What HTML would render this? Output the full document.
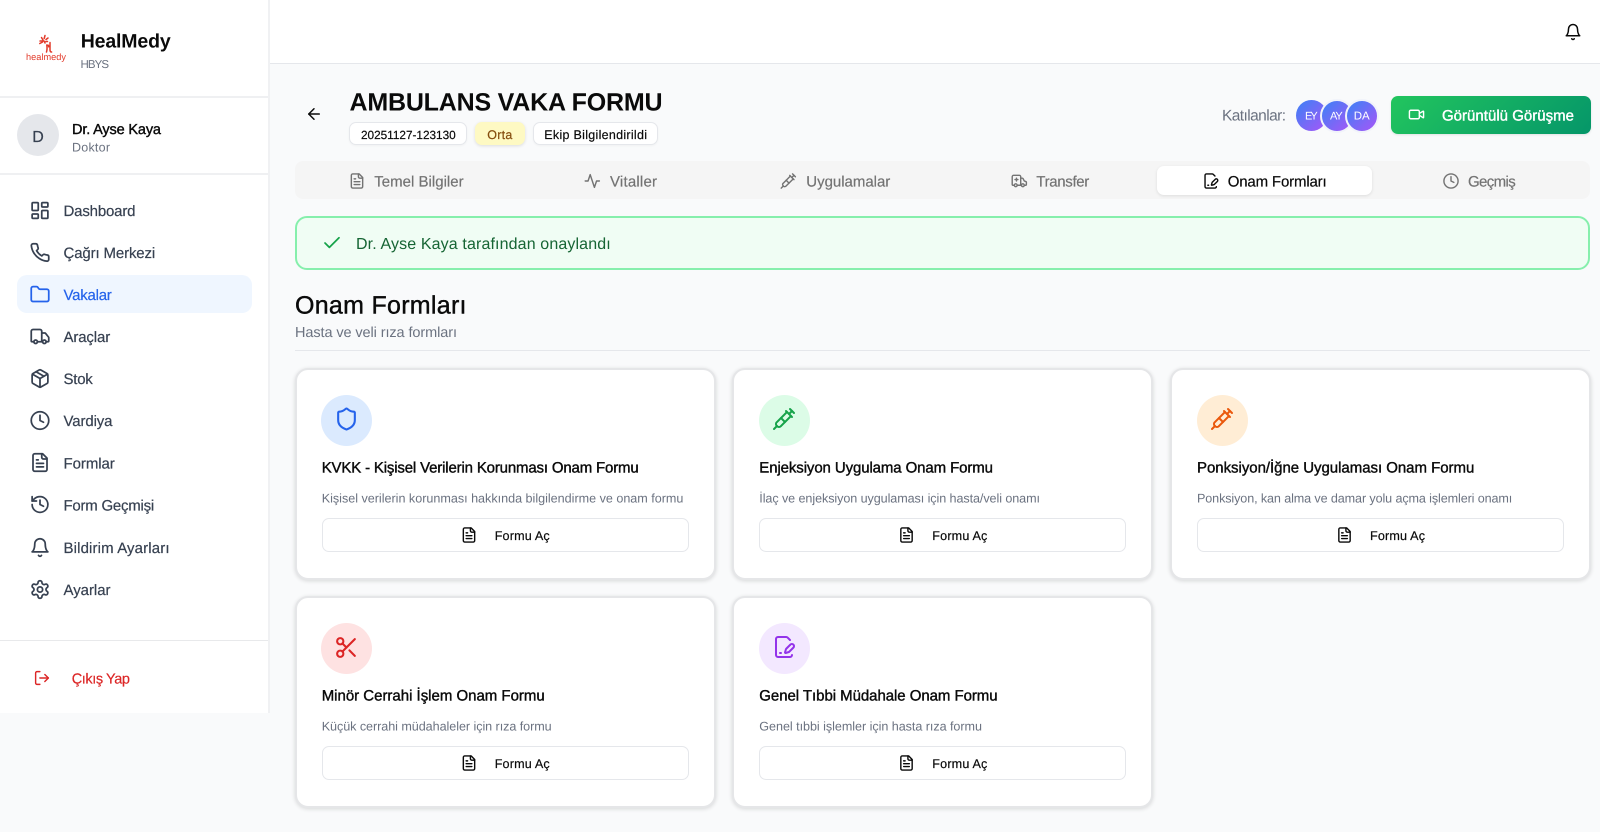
<!DOCTYPE html>
<html lang="tr">
<head>
<meta charset="utf-8">
<title>AMBULANS VAKA FORMU - HealMedy</title>
<style>
html,body{margin:0;padding:0;width:1600px;height:832px;overflow:hidden;background:#f9fafb;font-family:"Liberation Sans",sans-serif}
.b{position:absolute;box-sizing:border-box}
.card{background:#fff;border:2px solid #e5e6e8;border-radius:13px;width:421px;height:212px;box-shadow:0 1px 4px rgba(0,0,0,.14)}
.btn{background:#fff;border:1px solid #e5e7eb;border-radius:7px;width:367px;height:34px}
.badge{background:#fff;border:1px solid #e5e7eb;border-radius:7px;height:23px;top:122px;box-shadow:0 1px 2px rgba(0,0,0,.04)}
.circ{width:51px;height:51px;border-radius:50%}
.ava{width:31px;height:31px;border-radius:50%;top:100px;background:linear-gradient(135deg,#3b82f6,#a855f7)}
svg.o{position:absolute;left:0;top:0;width:1600px;height:832px;overflow:visible}
text{font-family:"Liberation Sans",sans-serif;text-rendering:geometricPrecision}
.m{stroke:currentColor;stroke-width:.2px}
.s{stroke:currentColor;stroke-width:.4px}
.i{fill:none;stroke:currentColor;stroke-width:2;stroke-linecap:round;stroke-linejoin:round}
</style>
</head>
<body>
<div class="b" style="left:0;top:0;width:270px;height:713px;background:#fff;border-right:2px solid #f0f1f3"></div>
<div class="b" style="left:0;top:96px;width:268px;height:2px;background:#eff0f2"></div>
<div class="b" style="left:0;top:173px;width:268px;height:2px;background:#eff0f2"></div>
<div class="b" style="left:0;top:640px;width:268px;height:1px;background:#e8e9eb"></div>
<div class="b" style="left:17px;top:114px;width:42px;height:42px;border-radius:50%;background:#e5e7eb"></div>
<div class="b" style="left:17px;top:275px;width:235px;height:38px;border-radius:10px;background:#eff6ff"></div>

<div class="b" style="left:270px;top:0;width:1330px;height:64px;background:#fff;border-bottom:1.5px solid #e5e7eb"></div>

<div class="b badge" style="left:349px;width:118px"></div>
<div class="b badge" style="left:475px;width:50px;background:#fef9c3;border-color:#fef9c3;box-shadow:0 1px 3px rgba(0,0,0,.12)"></div>
<div class="b badge" style="left:533px;width:125px"></div>

<div class="b ava" style="left:1296px"></div>
<div class="b ava" style="left:1320px;width:34px;height:34px;top:98.5px;border:2px solid #f1f3fa"></div>
<div class="b ava" style="left:1345px;width:34px;height:34px;top:98.5px;border:2px solid #f1f3fa"></div>
<div class="b" style="left:1391px;top:96px;width:200px;height:38px;border-radius:7px;background:linear-gradient(135deg,#22c55e,#059669);box-shadow:0 1px 2px rgba(0,0,0,.1)"></div>

<div class="b" style="left:295px;top:161px;width:1295px;height:38px;border-radius:8px;background:#f5f5f5"></div>
<div class="b" style="left:1157px;top:166px;width:215px;height:29px;border-radius:7px;background:#fff;box-shadow:0 1px 3px rgba(0,0,0,.1)"></div>

<div class="b" style="left:295px;top:216px;width:1295px;height:54px;border-radius:12px;background:#f0fdf4;border:2px solid #86efac"></div>

<div class="b" style="left:295px;top:350px;width:1295px;height:1px;background:#e5e7eb"></div>

<div class="b card" style="left:294.5px;top:367.5px"></div>
<div class="b card" style="left:732px;top:367.5px"></div>
<div class="b card" style="left:1169.5px;top:367.5px"></div>
<div class="b card" style="left:294.5px;top:595.5px"></div>
<div class="b card" style="left:732px;top:595.5px"></div>

<div class="b circ" style="left:321px;top:394.5px;background:#dbeafe"></div>
<div class="b circ" style="left:759px;top:394.5px;background:#dcfce7"></div>
<div class="b circ" style="left:1197px;top:394.5px;background:#ffedd5"></div>
<div class="b circ" style="left:321px;top:622.5px;background:#fee2e2"></div>
<div class="b circ" style="left:759px;top:622.5px;background:#f3e8ff"></div>

<div class="b btn" style="left:321.5px;top:518px"></div>
<div class="b btn" style="left:759px;top:518px"></div>
<div class="b btn" style="left:1197px;top:518px"></div>
<div class="b btn" style="left:321.5px;top:746px"></div>
<div class="b btn" style="left:759px;top:746px"></div>

<svg class="o" viewBox="0 0 1600 832" xmlns="http://www.w3.org/2000/svg">
<defs>
<symbol id="dash" viewBox="0 0 24 24"><rect x="3" y="3" width="7" height="9" rx="1"/><rect x="14" y="3" width="7" height="5" rx="1"/><rect x="14" y="12" width="7" height="9" rx="1"/><rect x="3" y="16" width="7" height="5" rx="1"/></symbol>
<symbol id="phone" viewBox="0 0 24 24"><path d="M22 16.92v3a2 2 0 0 1-2.18 2 19.79 19.79 0 0 1-8.63-3.07 19.5 19.5 0 0 1-6-6 19.79 19.79 0 0 1-3.07-8.67A2 2 0 0 1 4.11 2h3a2 2 0 0 1 2 1.72 12.84 12.84 0 0 0 .7 2.81 2 2 0 0 1-.45 2.11L8.09 9.91a16 16 0 0 0 6 6l1.27-1.27a2 2 0 0 1 2.11-.45 12.84 12.84 0 0 0 2.81.7A2 2 0 0 1 22 16.92z"/></symbol>
<symbol id="folder" viewBox="0 0 24 24"><path d="M20 20a2 2 0 0 0 2-2V8a2 2 0 0 0-2-2h-7.9a2 2 0 0 1-1.69-.9L9.6 3.9A2 2 0 0 0 7.93 3H4a2 2 0 0 0-2 2v13a2 2 0 0 0 2 2Z"/></symbol>
<symbol id="truck" viewBox="0 0 24 24"><path d="M14 18V6a2 2 0 0 0-2-2H4a2 2 0 0 0-2 2v11a1 1 0 0 0 1 1h2"/><path d="M15 18H9"/><path d="M19 18h2a1 1 0 0 0 1-1v-3.65a1 1 0 0 0-.22-.624l-3.48-4.35A1 1 0 0 0 17.52 8H14"/><circle cx="17" cy="18" r="2"/><circle cx="7" cy="18" r="2"/></symbol>
<symbol id="pack" viewBox="0 0 24 24"><path d="M21 8a2 2 0 0 0-1-1.73l-7-4a2 2 0 0 0-2 0l-7 4A2 2 0 0 0 3 8v8a2 2 0 0 0 1 1.73l7 4a2 2 0 0 0 2 0l7-4A2 2 0 0 0 21 16Z"/><path d="m3.3 7 8.7 5 8.7-5"/><path d="M12 22V12"/><path d="m7.5 4.27 9 5.15"/></symbol>
<symbol id="clock" viewBox="0 0 24 24"><circle cx="12" cy="12" r="10"/><path d="M12 6v6l4 2"/></symbol>
<symbol id="file" viewBox="0 0 24 24"><path d="M15 2H6a2 2 0 0 0-2 2v16a2 2 0 0 0 2 2h12a2 2 0 0 0 2-2V7Z"/><path d="M14 2v4a2 2 0 0 0 2 2h4"/><path d="M10 9H8"/><path d="M16 13H8"/><path d="M16 17H8"/></symbol>
<symbol id="hist" viewBox="0 0 24 24"><path d="M3 12a9 9 0 1 0 9-9 9.75 9.75 0 0 0-6.74 2.74L3 8"/><path d="M3 3v5h5"/><path d="M12 7v5l4 2"/></symbol>
<symbol id="bell" viewBox="0 0 24 24"><path d="M6 8a6 6 0 0 1 12 0c0 7 3 9 3 9H3s3-2 3-9"/><path d="M10.3 21a1.94 1.94 0 0 0 3.4 0"/></symbol>
<symbol id="gear" viewBox="0 0 24 24"><path d="M12.22 2h-.44a2 2 0 0 0-2 2v.18a2 2 0 0 1-1 1.73l-.43.25a2 2 0 0 1-2 0l-.15-.08a2 2 0 0 0-2.73.73l-.22.38a2 2 0 0 0 .73 2.73l.15.1a2 2 0 0 1 1 1.72v.51a2 2 0 0 1-1 1.74l-.15.09a2 2 0 0 0-.73 2.73l.22.38a2 2 0 0 0 2.73.73l.15-.08a2 2 0 0 1 2 0l.43.25a2 2 0 0 1 1 1.73V20a2 2 0 0 0 2 2h.44a2 2 0 0 0 2-2v-.18a2 2 0 0 1 1-1.73l.43-.25a2 2 0 0 1 2 0l.15.08a2 2 0 0 0 2.73-.73l.22-.39a2 2 0 0 0-.73-2.73l-.15-.08a2 2 0 0 1-1-1.74v-.5a2 2 0 0 1 1-1.74l.15-.09a2 2 0 0 0 .73-2.73l-.22-.38a2 2 0 0 0-2.73-.73l-.15.08a2 2 0 0 1-2 0l-.43-.25a2 2 0 0 1-1-1.73V4a2 2 0 0 0-2-2z"/><circle cx="12" cy="12" r="3"/></symbol>
<symbol id="out" viewBox="0 0 24 24"><path d="M9 21H5a2 2 0 0 1-2-2V5a2 2 0 0 1 2-2h4"/><path d="m16 17 5-5-5-5"/><path d="M21 12H9"/></symbol>
<symbol id="back" viewBox="0 0 24 24"><path d="m12 19-7-7 7-7"/><path d="M19 12H5"/></symbol>
<symbol id="act" viewBox="0 0 24 24"><path d="M22 12h-4l-3 9L9 3l-3 9H2"/></symbol>
<symbol id="syr" viewBox="0 0 24 24"><path d="m18 2 4 4"/><path d="m17 7 3-3"/><path d="M19 9 8.7 19.3c-1 1-2.5 1-3.4 0l-.6-.6c-1-1-1-2.5 0-3.4L15 5"/><path d="m9 11 4 4"/><path d="m5 19-3 3"/><path d="m14 4 6 6"/></symbol>
<symbol id="amb" viewBox="0 0 24 24"><path d="M10 10H6"/><path d="M14 18V6a2 2 0 0 0-2-2H4a2 2 0 0 0-2 2v11a1 1 0 0 0 1 1h2"/><path d="M19 18h2a1 1 0 0 0 1-1v-3.28a1 1 0 0 0-.684-.948l-1.923-.641a1 1 0 0 1-.578-.502l-1.539-3.076A1 1 0 0 0 16.382 8H14"/><path d="M8 8v4"/><path d="M9 18h6"/><circle cx="17" cy="18" r="2"/><circle cx="7" cy="18" r="2"/></symbol>
<symbol id="fpen" viewBox="0 0 24 24"><path d="m18 5-2.414-2.414A2 2 0 0 0 14.172 2H6a2 2 0 0 0-2 2v16a2 2 0 0 0 2 2h12a2 2 0 0 0 2-2"/><path d="M21.378 12.626a1 1 0 0 0-3.004-3.004l-4.01 4.012a2 2 0 0 0-.506.854l-.837 2.87a.5.5 0 0 0 .62.62l2.87-.837a2 2 0 0 0 .854-.506z"/><path d="M8 18h1"/></symbol>
<symbol id="vid" viewBox="0 0 24 24"><path d="m16 13 5.223 3.482a.5.5 0 0 0 .777-.416V7.87a.5.5 0 0 0-.752-.432L16 10.5"/><rect x="2" y="6" width="14" height="12" rx="2"/></symbol>
<symbol id="chk" viewBox="0 0 24 24"><path d="M20 6 9 17l-5-5"/></symbol>
<symbol id="shield" viewBox="0 0 24 24"><path d="M20 13c0 5-3.5 7.5-7.66 8.95a1 1 0 0 1-.67-.01C7.5 20.5 4 18 4 13V6a1 1 0 0 1 1-1c2 0 4.5-1.2 6.24-2.72a1.17 1.17 0 0 1 1.52 0C14.51 3.81 17 5 19 5a1 1 0 0 1 1 1z"/></symbol>
<symbol id="sci" viewBox="0 0 24 24"><circle cx="6" cy="6" r="3"/><path d="M8.12 8.12 12 12"/><path d="M20 4 8.12 15.88"/><circle cx="6" cy="18" r="3"/><path d="M14.8 14.8 20 20"/></symbol>
</defs>

<!-- logo -->
<g fill="none" stroke="#e23a2a" stroke-linecap="round">
<path d="M46.8 45c.4 2.6.3 5-.3 7M47.2 45.4c1-.6 1.6 0 1.4 1.4M50 42.5v7.5c0 1.4.6 2 1.6 2" stroke-width="1.5"/>
<path d="M40 41h4M41.5 37.5l1.5 2.5M45 35.5l-.8 3M39.8 43.5l2.8-1.5M48 38l-2 1.5M45 43l-.5-1.5M47.5 41.5h-1.5" stroke-width="1.5"/>
</g>
<text x="26" y="60" font-size="9.2" fill="#e23a2a" textLength="40">healmedy</text>

<!-- sidebar text -->
<text x="80.7" y="47.5" font-size="19.5" font-weight="700" fill="#0a0a0a" textLength="90">HealMedy</text>
<text x="80.5" y="68" font-size="11.5" fill="#6b7280" textLength="28.5">HBYS</text>
<text x="38" y="142" font-size="16" text-anchor="middle" fill="#374151" style="color:#374151" class="m">D</text>
<text x="72" y="134" font-size="14.5" fill="#0a0a0a" style="color:#0a0a0a" class="s" textLength="89">Dr. Ayse Kaya</text>
<text x="72" y="151.5" font-size="12.5" fill="#6b7280" textLength="38">Doktor</text>

<g font-size="15" fill="#374151" style="color:#374151">
<text class="m" x="63.5" y="216" textLength="72">Dashboard</text>
<text class="m" x="63.5" y="258" textLength="91.7">Çağrı Merkezi</text>
<text class="m" x="63.5" y="300" textLength="48.3" fill="#2563eb" style="color:#2563eb">Vakalar</text>
<text class="m" x="63.5" y="342" textLength="46.7">Araçlar</text>
<text class="m" x="63.5" y="384" textLength="29.3">Stok</text>
<text class="m" x="63.5" y="426" textLength="49">Vardiya</text>
<text class="m" x="63.5" y="468.5" textLength="51.3">Formlar</text>
<text class="m" x="63.5" y="510.5" textLength="90.7">Form Geçmişi</text>
<text class="m" x="63.5" y="552.8" textLength="106">Bildirim Ayarları</text>
<text class="m" x="63.5" y="595" textLength="47">Ayarlar</text>
</g>
<text class="m" x="71.7" y="683.3" font-size="14.5" fill="#dc2626" style="color:#dc2626" textLength="58.3">Çıkış Yap</text>

<!-- sidebar icons -->
<g class="i" style="color:#374151" stroke-width="2">
<use href="#dash" x="29.5" y="200" width="21" height="21"/>
<use href="#phone" x="29.5" y="242" width="21" height="21"/>
<use href="#folder" x="29.5" y="284" width="21" height="21" style="color:#2563eb"/>
<use href="#truck" x="29.5" y="326" width="21" height="21"/>
<use href="#pack" x="29.5" y="368" width="21" height="21"/>
<use href="#clock" x="29.5" y="410" width="21" height="21"/>
<use href="#file" x="29.5" y="452" width="21" height="21"/>
<use href="#hist" x="29.5" y="494" width="21" height="21"/>
<use href="#bell" x="29.5" y="537" width="21" height="21"/>
<use href="#gear" x="29.5" y="579" width="21" height="21"/>
<use href="#out" x="33.5" y="669.5" width="17" height="17" style="color:#dc2626"/>
</g>

<!-- header icons -->
<g class="i" style="color:#0a0a0a">
<use href="#bell" x="1564" y="23" width="18" height="18"/>
<use href="#back" x="305" y="105" width="18" height="18"/>
</g>

<!-- title -->
<text x="349.5" y="110.7" font-size="25" font-weight="700" fill="#0a0a0a" textLength="313">AMBULANS VAKA FORMU</text>
<text class="m" x="361" y="139" font-size="11.8" fill="#0a0a0a" style="color:#0a0a0a" textLength="94.7">20251127-123130</text>
<text class="m" x="487.3" y="139" font-size="12.5" fill="#854d0e" style="color:#854d0e" textLength="25">Orta</text>
<text class="m" x="544.3" y="139" font-size="12.5" fill="#0a0a0a" style="color:#0a0a0a" textLength="102.7">Ekip Bilgilendirildi</text>

<text x="1222" y="120.5" font-size="15.5" fill="#6b7280" textLength="64">Katılanlar:</text>
<g font-size="11" fill="#fff">
<text x="1305" y="119.5" textLength="12.7">EY</text>
<text x="1330" y="119.5" textLength="12.7">AY</text>
<text x="1353.7" y="119.5" font-size="11.5" textLength="16">DA</text>
</g>
<use href="#vid" class="i" style="color:#fff" x="1408" y="106" width="17" height="17"/>
<text class="s" x="1442" y="120.5" font-size="15" fill="#fff" style="color:#fff" textLength="132">Görüntülü Görüşme</text>

<!-- tabs -->
<g font-size="15" fill="#737373" style="color:#737373">
<text class="m" x="374.3" y="186.7" textLength="89.3">Temel Bilgiler</text>
<text class="m" x="610" y="186.7" textLength="47">Vitaller</text>
<text class="m" x="806.3" y="186.7" textLength="84">Uygulamalar</text>
<text class="m" x="1036.3" y="186.7" textLength="53">Transfer</text>
<text class="m" x="1227.7" y="186.7" textLength="99" fill="#0a0a0a" style="color:#0a0a0a">Onam Formları</text>
<text class="m" x="1468" y="186.7" textLength="47.7">Geçmiş</text>
</g>
<g class="i" style="color:#737373">
<use href="#file" x="348.5" y="172.5" width="17" height="17"/>
<use href="#act" x="583.8" y="172.5" width="17" height="17"/>
<use href="#syr" x="779.8" y="172.5" width="17" height="17"/>
<use href="#amb" x="1010.8" y="172.5" width="17" height="17"/>
<use href="#fpen" x="1202.2" y="172.5" width="17" height="17" style="color:#0a0a0a"/>
<use href="#clock" x="1442.5" y="172.5" width="17" height="17"/>
</g>

<!-- alert -->
<use href="#chk" class="i" style="color:#16a34a" x="321.5" y="232.5" width="21" height="21"/>
<text x="356" y="249.2" font-size="16" fill="#166534" textLength="254.7">Dr. Ayse Kaya tarafından onaylandı</text>

<!-- section head -->
<text class="s" x="295" y="313.5" font-size="25" fill="#0a0a0a" style="color:#0a0a0a" textLength="171.5">Onam Formları</text>
<text x="295" y="337" font-size="14.5" fill="#6b7280" textLength="162">Hasta ve veli rıza formları</text>

<!-- card icons -->
<g class="i">
<use href="#shield" x="334" y="406.5" width="25" height="25" style="color:#2563eb"/>
<use href="#syr" x="772" y="407" width="24" height="24" style="color:#16a34a"/>
<use href="#syr" x="1210" y="407" width="24" height="24" style="color:#ea580c"/>
<use href="#sci" x="334" y="635" width="25" height="25" style="color:#dc2626"/>
<use href="#fpen" x="772" y="635" width="24" height="24" style="color:#9333ea"/>
<g style="color:#0a0a0a">
<use href="#file" x="460.5" y="526.5" width="17" height="17"/>
<use href="#file" x="898" y="526.5" width="17" height="17"/>
<use href="#file" x="1336" y="526.5" width="17" height="17"/>
<use href="#file" x="460.5" y="754.5" width="17" height="17"/>
<use href="#file" x="898" y="754.5" width="17" height="17"/>
</g>
</g>

<!-- card titles -->
<g font-size="15" fill="#0a0a0a" style="color:#0a0a0a">
<text class="s" x="321.7" y="472.7" textLength="317">KVKK - Kişisel Verilerin Korunması Onam Formu</text>
<text class="s" x="759.3" y="472.7" textLength="233.7">Enjeksiyon Uygulama Onam Formu</text>
<text class="s" x="1197" y="472.7" textLength="277.3">Ponksiyon/İğne Uygulaması Onam Formu</text>
<text class="s" x="321.7" y="700.7" textLength="223">Minör Cerrahi İşlem Onam Formu</text>
<text class="s" x="759.3" y="700.7" textLength="238.3">Genel Tıbbi Müdahale Onam Formu</text>
</g>
<g font-size="12.6" fill="#6b7280">
<text x="321.7" y="502.3" textLength="361.7">Kişisel verilerin korunması hakkında bilgilendirme ve onam formu</text>
<text x="759.3" y="502.3" textLength="280.7">İlaç ve enjeksiyon uygulaması için hasta/veli onamı</text>
<text x="1197" y="502.3" textLength="315.3">Ponksiyon, kan alma ve damar yolu açma işlemleri onamı</text>
<text x="321.7" y="730.3" textLength="230">Küçük cerrahi müdahaleler için rıza formu</text>
<text x="759.3" y="730.3" textLength="222.7">Genel tıbbi işlemler için hasta rıza formu</text>
</g>
<g font-size="12.6" fill="#0a0a0a" style="color:#0a0a0a">
<text class="m" x="494.7" y="540" textLength="55">Formu Aç</text>
<text class="m" x="932.3" y="540" textLength="55">Formu Aç</text>
<text class="m" x="1370" y="540" textLength="55">Formu Aç</text>
<text class="m" x="494.7" y="768" textLength="55">Formu Aç</text>
<text class="m" x="932.3" y="768" textLength="55">Formu Aç</text>
</g>
</svg>
</body>
</html>
